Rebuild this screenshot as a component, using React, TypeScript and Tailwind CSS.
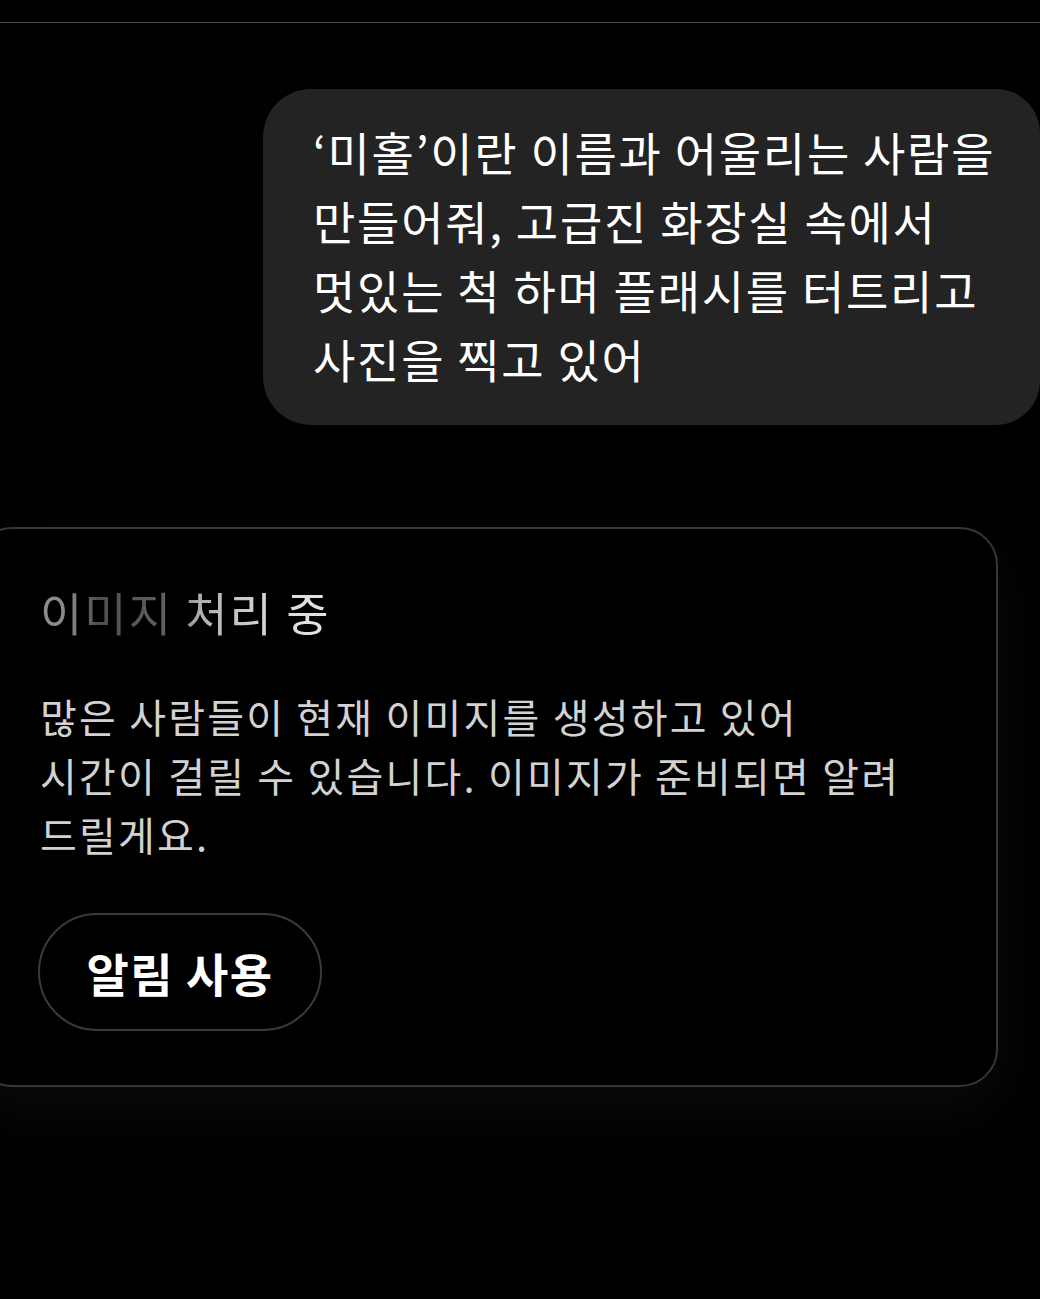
const KR = { fontFamily: '"Noto Sans CJK KR", "Noto Sans", sans-serif' };

function PromptBubble({ lines }: { lines: string[] }) {
  return (
    <div className="ml-auto w-[777px] rounded-l-[48px] rounded-r-[44px] bg-[#232323] pb-[32px] pl-[50px] pr-[20px] pt-[28px]">
      {lines.map((line) => (
        <div key={line} className="whitespace-nowrap text-[46px] leading-[69px] tracking-[1.75px] text-white">
          {line}
        </div>
      ))}
    </div>
  );
}

function ProcessingCard({ body }: { body: string[] }) {
  return (
    <section className="-ml-[26px] w-[1024px] rounded-[38px] border-2 border-[#363636] bg-black pb-[54px] pl-[64px] pt-[54px] shadow-[0_24px_60px_rgba(255,255,255,0.045)]">
      <h2 className="w-fit bg-[linear-gradient(90deg,#8c8c8c_0%,#8a8a8a_10%,#4e4e4e_20%,#5e5e5e_42%,#b0b0b0_55%,#d8d8d8_80%,#e4e4e4_100%)] bg-clip-text text-[46px] leading-[57px] font-normal tracking-[2px] text-transparent">
        이미지 처리 중
      </h2>
      <div className="mt-[47px]">
        {body.map((line) => (
          <div key={line} className="whitespace-nowrap text-[40px] leading-[59px] tracking-[2.2px] text-[#d2d2d2]">
            {line}
          </div>
        ))}
      </div>
      <button
        type="button"
        className="-ml-[2px] mt-[49px] flex h-[118px] w-[284px] items-center justify-center rounded-full border-2 border-[#3a3a3a] bg-black text-[46px] font-bold tracking-[1.5px] text-white"
      >
        알림 사용
      </button>
    </section>
  );
}

export default function App() {
  return (
    <div className="min-h-[1299px] w-[1040px] overflow-hidden bg-black" style={KR}>
      <div className="h-[23px] border-b border-[#474747]" />
      <div className="mt-[66px]">
        <PromptBubble
          lines={[
            "‘미홀’이란 이름과 어울리는 사람을",
            "만들어줘, 고급진 화장실 속에서",
            "멋있는 척 하며 플래시를 터트리고",
            "사진을 찍고 있어",
          ]}
        />
      </div>
      <div className="mt-[102px]">
        <ProcessingCard
          body={[
            "많은 사람들이 현재 이미지를 생성하고 있어",
            "시간이 걸릴 수 있습니다. 이미지가 준비되면 알려",
            "드릴게요.",
          ]}
        />
      </div>
    </div>
  );
}
